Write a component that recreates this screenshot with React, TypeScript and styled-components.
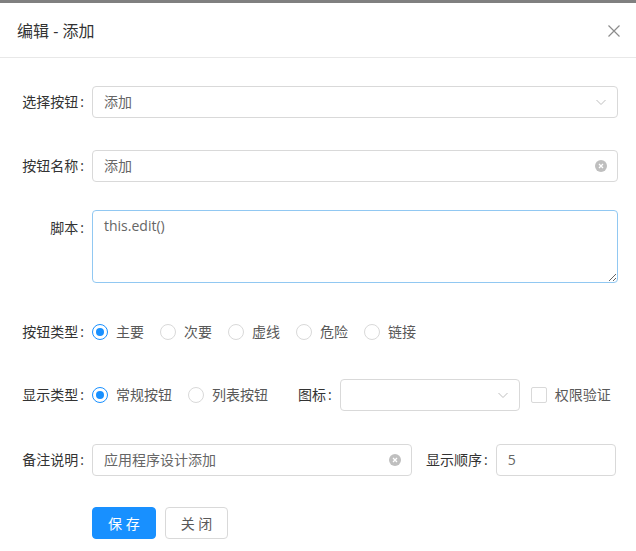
import React from 'react';
import styled, {createGlobalStyle} from 'styled-components';

const GlobalStyle = createGlobalStyle`
    html, body {
        margin: 0;
        padding: 0;
        background: #fff;
    }
    body {
        font-family: "Open Sans", "Noto Sans CJK SC", sans-serif;
        font-size: 14px;
        color: #333;
    }
`;

const Dialog = styled.div`
    width: 636px;
    height: 551px;
    background: #fff;
    overflow: hidden;
`;

const TopBar = styled.div`
    height: 3px;
    background: #808080;
`;

const Header = styled.div`
    height: 54px;
    border-bottom: 1px solid #e8e8e8;
    display: flex;
    align-items: center;
    justify-content: space-between;
    padding: 0 14px 0 17px;
`;

const Title = styled.div`
    font-size: 16px;
    line-height: 22px;
    color: #333;
    margin-top: 2px;
`;

const CloseButton = styled.button`
    width: 16px;
    height: 16px;
    padding: 0;
    border: none;
    background: none;
    display: flex;
    align-items: center;
    justify-content: center;
    cursor: pointer;
    margin-top: 2px;
`;

const Form = styled.div`
    display: flex;
    flex-direction: column;
    padding: 28px 18px 0 0;
`;

const Row = styled.div<{$gap: number; $top?: boolean}>`
    display: flex;
    align-items: ${p => (p.$top ? 'flex-start' : 'center')};
    margin-bottom: ${p => p.$gap}px;
    white-space: nowrap;
`;

const Label = styled.label<{$width?: number; $lineHeight?: number}>`
    flex-shrink: 0;
    width: ${p => (p.$width ? `${p.$width}px` : 'auto')};
    text-align: right;
    color: #333;
    line-height: ${p => p.$lineHeight || 32}px;
    white-space: nowrap;
    &::after {
        content: ':';
        margin: 0 8px 0 2px;
    }
`;

const Field = styled.div<{$width?: number}>`
    position: relative;
    box-sizing: border-box;
    ${p => (p.$width ? `width: ${p.$width}px; flex-shrink: 0;` : 'flex: 1;')}
    height: 32px;
    border: 1px solid #d9d9d9;
    border-radius: 4px;
    padding: 0 11px;
    display: flex;
    align-items: center;
    justify-content: space-between;
    color: #666;
    line-height: 30px;
    background: #fff;
`;

const TextArea = styled.textarea`
    box-sizing: border-box;
    flex: 1;
    height: 73px;
    border: 1px solid #91c8f2;
    border-radius: 4px;
    padding: 5px 11px;
    font-family: "Open Sans", "Noto Sans CJK SC", sans-serif;
    font-size: 14px;
    line-height: 20px;
    color: #666;
    outline: none;
    resize: vertical;
`;

const RadioGroup = styled.div`
    display: flex;
    align-items: center;
    flex-shrink: 0;
`;

const RadioItem = styled.label`
    display: flex;
    align-items: center;
    flex-shrink: 0;
    margin-right: 8px;
    color: #595959;
    line-height: 32px;
    cursor: pointer;
`;

const RadioCircle = styled.span<{$checked?: boolean}>`
    position: relative;
    box-sizing: border-box;
    flex-shrink: 0;
    width: 16px;
    height: 16px;
    border-radius: 50%;
    border: 1px solid ${p => (p.$checked ? '#1890ff' : '#d9d9d9')};
    background: #fff;
    &::after {
        content: '';
        display: ${p => (p.$checked ? 'block' : 'none')};
        position: absolute;
        left: 3px;
        top: 3px;
        width: 8px;
        height: 8px;
        border-radius: 50%;
        background: #1890ff;
    }
`;

const OptionText = styled.span`
    padding: 0 8px;
    white-space: nowrap;
`;

const Checkbox = styled.span`
    box-sizing: border-box;
    flex-shrink: 0;
    width: 16px;
    height: 16px;
    border: 1px solid #d9d9d9;
    border-radius: 2px;
    background: #fff;
`;

const CheckItem = styled.label`
    display: flex;
    align-items: center;
    flex-shrink: 0;
    margin-left: 11px;
    color: #595959;
    line-height: 32px;
`;

const Spacer = styled.div<{$width: number}>`
    width: ${p => p.$width}px;
    flex-shrink: 0;
`;

const Actions = styled.div`
    display: flex;
    gap: 9px;
    padding-left: 92px;
`;

const Button = styled.button<{$primary?: boolean}>`
    box-sizing: border-box;
    height: 32px;
    padding: 0 15px;
    border-radius: 4px;
    border: 1px solid ${p => (p.$primary ? '#1890ff' : '#d9d9d9')};
    background: ${p => (p.$primary ? '#1890ff' : '#fff')};
    color: ${p => (p.$primary ? '#fff' : '#595959')};
    font-family: "Open Sans", "Noto Sans CJK SC", sans-serif;
    font-size: 14px;
    cursor: pointer;
`;

const IconWrap = styled.span`
    display: flex;
    align-items: center;
    margin-right: -1px;
`;

const ChevronDown = () => (
    <IconWrap>
        <svg width="12" height="12" viewBox="0 0 12 12">
            <path d="M1.5 4 L6 8.5 L10.5 4" fill="none" stroke="#bfbfbf" strokeWidth="1" />
        </svg>
    </IconWrap>
);

const ClearIcon = () => (
    <IconWrap>
        <svg width="12" height="12" viewBox="0 0 12 12">
            <circle cx="6" cy="6" r="6" fill="#bfbfbf" />
            <path d="M4 4 L8 8 M8 4 L4 8" stroke="#fff" strokeWidth="1.3" />
        </svg>
    </IconWrap>
);

const buttonTypes = ['主要', '次要', '虚线', '危险', '链接'];

export default function App() {
    return (
        <>
            <GlobalStyle />
            <Dialog>
                <TopBar />
                <Header>
                    <Title>编辑 - 添加</Title>
                    <CloseButton aria-label="关闭">
                        <svg width="12" height="12" viewBox="0 0 12 12">
                            <path d="M0.5 0.5 L11.5 11.5 M11.5 0.5 L0.5 11.5" stroke="#8c8c8c" strokeWidth="1.2" />
                        </svg>
                    </CloseButton>
                </Header>

                <Form>
                    <Row $gap={32}>
                        <Label $width={92}>选择按钮</Label>
                        <Field>
                            <span>添加</span>
                            <ChevronDown />
                        </Field>
                    </Row>

                    <Row $gap={28}>
                        <Label $width={92}>按钮名称</Label>
                        <Field>
                            <span>添加</span>
                            <ClearIcon />
                        </Field>
                    </Row>

                    <Row $gap={33} $top>
                        <Label $width={92} $lineHeight={36}>脚本</Label>
                        <TextArea defaultValue="this.edit()" />
                    </Row>

                    <Row $gap={31}>
                        <Label $width={92}>按钮类型</Label>
                        <RadioGroup>
                            {buttonTypes.map((t, i) => (
                                <RadioItem key={t}>
                                    <RadioCircle $checked={i === 0} />
                                    <OptionText>{t}</OptionText>
                                </RadioItem>
                            ))}
                        </RadioGroup>
                    </Row>

                    <Row $gap={33}>
                        <Label $width={92}>显示类型</Label>
                        <RadioGroup>
                            <RadioItem>
                                <RadioCircle $checked />
                                <OptionText>常规按钮</OptionText>
                            </RadioItem>
                            <RadioItem>
                                <RadioCircle />
                                <OptionText>列表按钮</OptionText>
                            </RadioItem>
                        </RadioGroup>
                        <Spacer $width={14} />
                        <Label>图标</Label>
                        <Field $width={180}>
                            <span />
                            <ChevronDown />
                        </Field>
                        <CheckItem>
                            <Checkbox />
                            <OptionText>权限验证</OptionText>
                        </CheckItem>
                    </Row>

                    <Row $gap={31}>
                        <Label $width={92}>备注说明</Label>
                        <Field $width={320}>
                            <span>应用程序设计添加</span>
                            <ClearIcon />
                        </Field>
                        <Spacer $width={14} />
                        <Label>显示顺序</Label>
                        <Field $width={120}>
                            <span>5</span>
                        </Field>
                    </Row>

                    <Actions>
                        <Button $primary>保 存</Button>
                        <Button>关 闭</Button>
                    </Actions>
                </Form>
            </Dialog>
        </>
    );
}
